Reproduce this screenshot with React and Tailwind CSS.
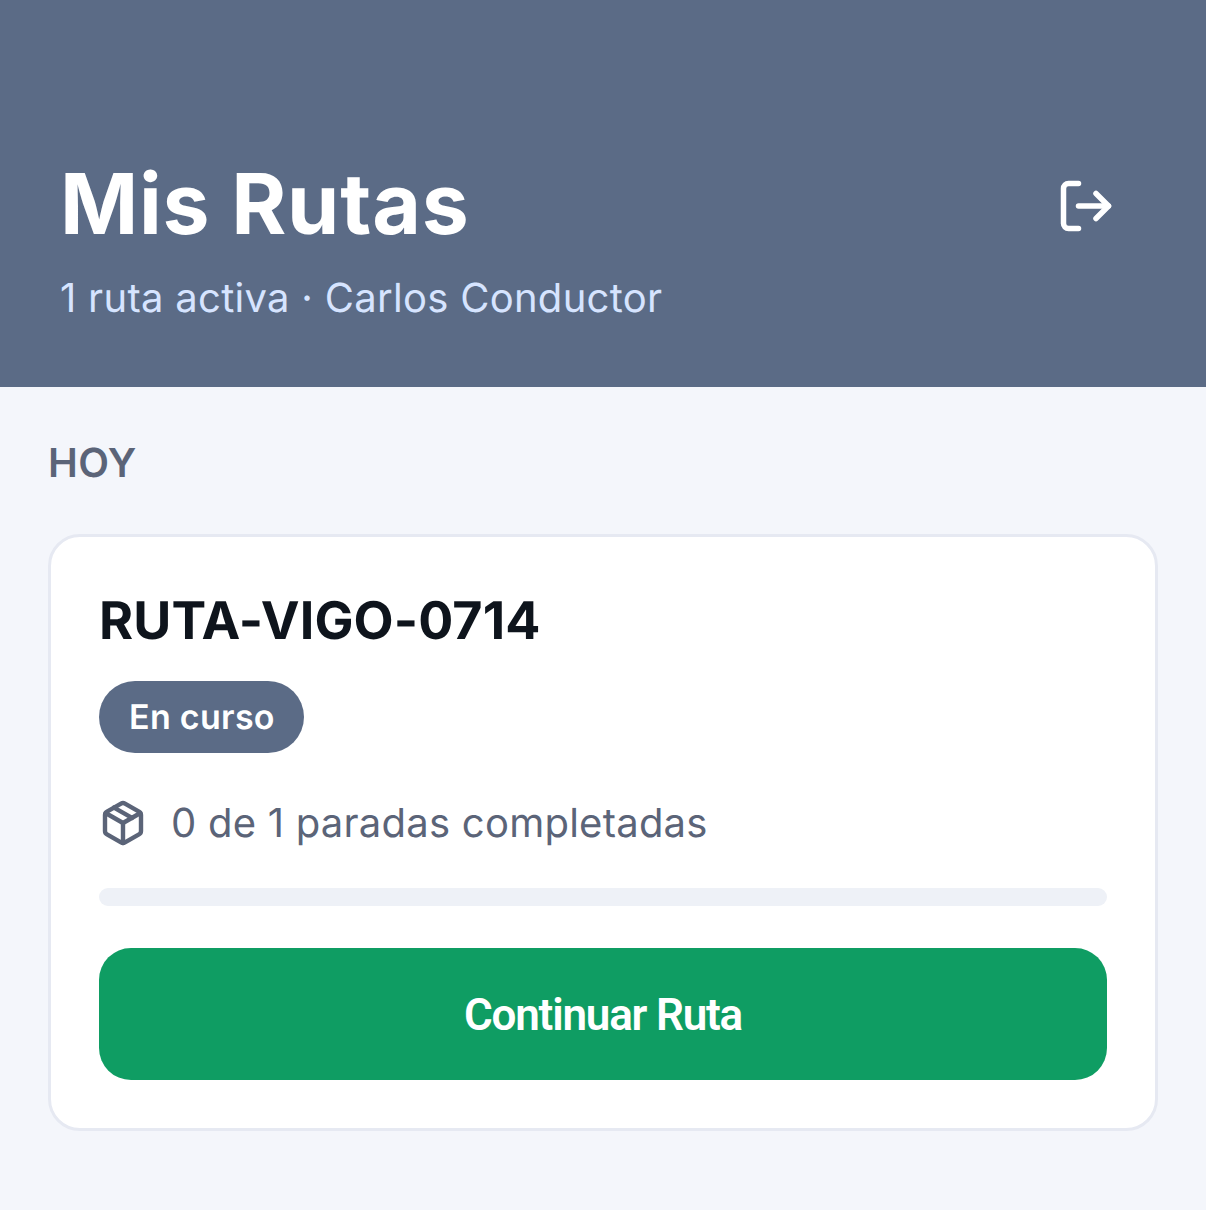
import { LogOut, Package } from "lucide-react";

export default function App() {
  return (
    <div className="min-h-[1210px] bg-[#f4f6fb] font-['Inter',sans-serif] [text-rendering:geometricPrecision]">
      <header className="h-[387px] bg-[#5b6b86] pl-[60px] pr-[90px] pt-[157px]">
        <div className="flex items-center justify-between">
          <h1 className="text-[84px] leading-[96px] font-bold tracking-[0.8px] text-white">Mis Rutas</h1>
          <LogOut className="mt-[1px] w-[60px] h-[60px] text-white" strokeWidth={2.2} />
        </div>
        <p className="mt-[15px] text-[40px] leading-[60px] tracking-[0.29px] text-[#d6e4ff]">1 ruta activa · Carlos Conductor</p>
      </header>
      <main className="px-[48px] pt-[48px]">
        <h2 className="text-[40px] leading-[56px] font-semibold tracking-[0.4px] text-[#5b6478]">HOY</h2>
        <section className="mt-[43px] rounded-[32px] border-[3px] border-[#e6e9f2] bg-white px-[48px] pt-[49px] pb-[48px]">
          <h3 className="pt-[1px] -mb-[1px] text-[52px] leading-[68px] font-bold tracking-[0.1px] text-[#0e141c]">RUTA-VIGO-0714</h3>
          <span className="mt-[27px] inline-block rounded-full bg-[#5b6b86] pl-[30px] pr-[29px] pt-[13px] pb-[11px] text-[34px] leading-[48px] font-semibold tracking-[0.3px] text-white">En curso</span>
          <div className="mt-[40px] flex items-center gap-[24px]">
            <Package className="w-[48px] h-[48px] text-[#5b6478]" strokeWidth={2.2} />
            <span className="text-[40px] leading-[60px] tracking-[0.24px] text-[#5b6478]">0 de 1 paradas completadas</span>
          </div>
          <div className="mt-[35px] h-[18px] rounded-full bg-[#eef1f7]" />
          <button className="mt-[42px] block h-[132px] w-full rounded-[32px] bg-[#0f9d63] pt-[2px] font-['Roboto',sans-serif] text-[44px] font-semibold tracking-[-1.2px] text-white">Continuar Ruta</button>
        </section>
      </main>
    </div>
  );
}
